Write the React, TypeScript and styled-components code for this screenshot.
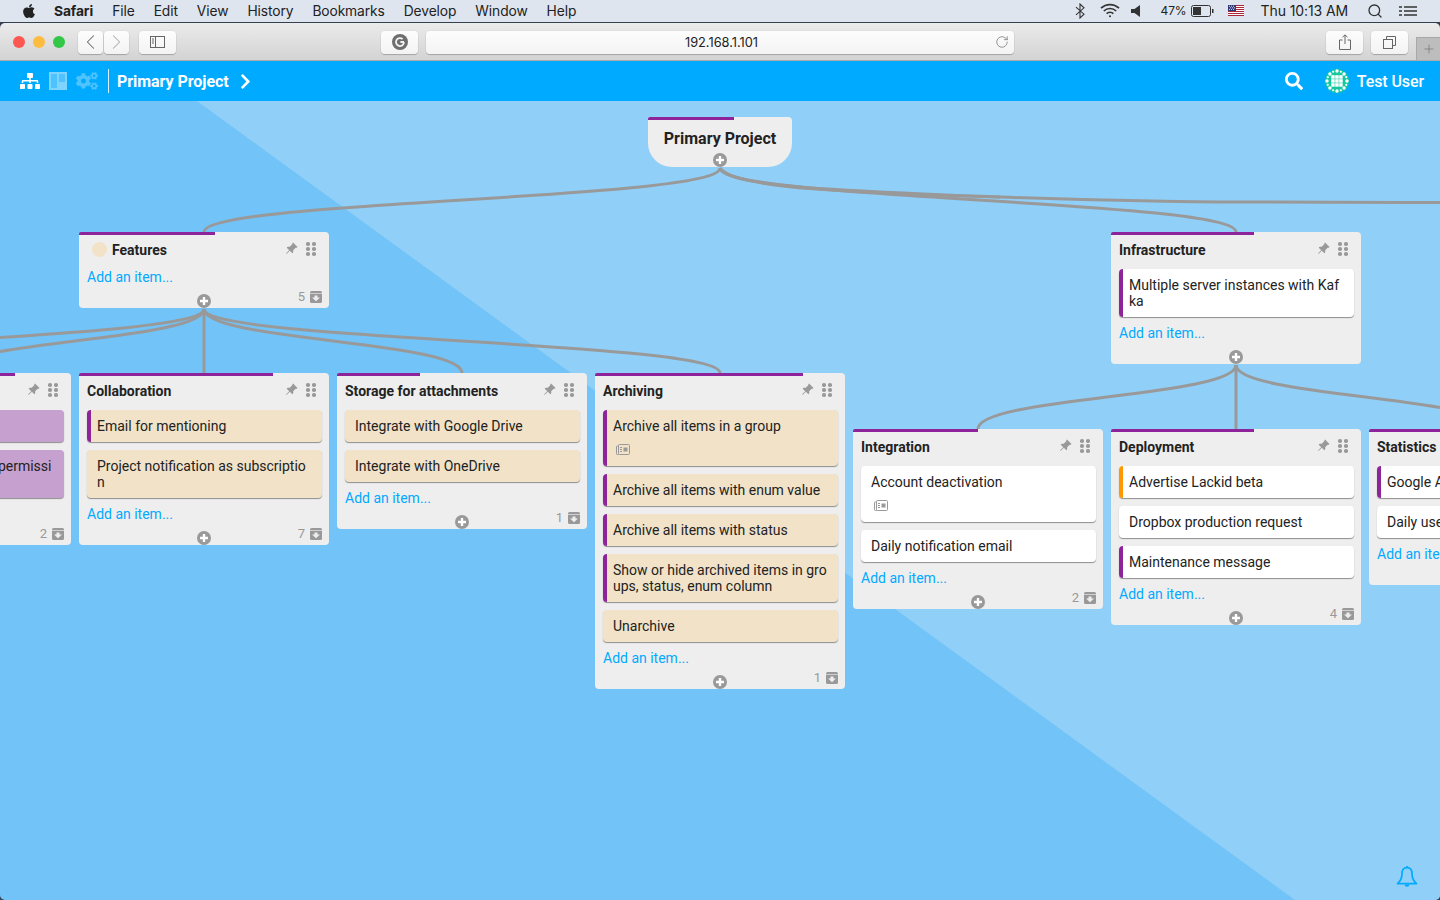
import React from "react";
import styled, { createGlobalStyle } from "styled-components";
import { BsPinAngleFill } from "react-icons/bs";
import { FaApple, FaSitemap, FaCogs, FaChevronRight, FaSearch } from "react-icons/fa";
import { Search as LSearch, RotateCw, ChevronLeft, ChevronRight, Plus } from "lucide-react";

const Global = createGlobalStyle`
  html, body { margin: 0; padding: 0; height: 100%; overflow: hidden; }
  body { font-family: Roboto, "Liberation Sans", sans-serif; }
  * { box-sizing: border-box; }
`;

const Page = styled.div`
  width: 1440px; height: 900px; display: flex; flex-direction: column; overflow: hidden; background: #33404f;
`;
const MenuBar = styled.div`
  height: 22px; flex: none; display: flex; align-items: center; justify-content: space-between;
  background: #dfe5ef; color: #222; font: 400 13.8px Inter, "Liberation Sans", sans-serif; padding: 0 23px 1px 21px;
  letter-spacing: -0.1px;
`;
const MenuGroup = styled.div<{ $gap?: number }>`
  display: flex; align-items: center; gap: ${p => p.$gap ?? 18}px;
`;
const MenuName = styled.span<{ $bold?: boolean }>`
  font-weight: ${p => (p.$bold ? 700 : 400)};
`;
const Percent = styled.span`
  font-size: 12px; margin-left: 6px;
`;
const Clock = styled.span`
  margin-left: 3px; font-size: 14px;
`;
const Toolbar = styled.div`
  height: 38px; flex: none; margin-top: 1px; position: relative; display: flex; align-items: center;
  padding: 1px 32px 0 13px; background: linear-gradient(#ebebeb, #d3d3d3);
  border-top-left-radius: 5px; border-top-right-radius: 5px; border-bottom: 1px solid #ababab;
`;
const Light = styled.span<{ $c: string }>`
  width: 12px; height: 12px; border-radius: 50%; background: ${p => p.$c}; margin-right: 8px; flex: none;
`;
const TBtn = styled.div<{ $w: number; $ml?: number }>`
  width: ${p => p.$w}px; height: 23px; margin-left: ${p => p.$ml ?? 0}px; flex: none;
  display: flex; align-items: center; justify-content: center; background: linear-gradient(#fdfdfd, #f3f3f3);
  border-radius: 4px; box-shadow: 0 1px 1px rgba(0,0,0,.22), 0 0 0 .5px rgba(0,0,0,.06); color: #666; position: relative;
`;
const Address = styled(TBtn)`
  font: 400 12.8px Inter, "Liberation Sans", sans-serif; color: #222; padding-left: 3px;
`;
const ReloadSlot = styled.span`
  position: absolute; right: 5px; top: 4px; display: flex; color: #777;
`;
const NewTab = styled.div`
  position: absolute; right: 0; bottom: 0; width: 24px; height: 23px; background: #bdbdbd;
  border-left: 1px solid #a8a8a8; border-top: 1px solid #a8a8a8; display: flex; align-items: center; justify-content: center; color: #666;
`;
const AppBar = styled.div`
  height: 40px; flex: none; background: #00aaff; display: flex; align-items: center; justify-content: space-between;
  padding: 0 16px 0 20px; color: #fff;
`;
const BarGroup = styled.div`
  display: flex; align-items: center;
`;
const Sep = styled.span`
  width: 1px; height: 24px; background: rgba(255,255,255,.85); margin: 0 8px 0 10px;
`;
const Crumb = styled.span`
  font-size: 16px; font-weight: 700; letter-spacing: -0.05px; margin-right: 8px;
`;
const UserName = styled.span`
  font-size: 16px; font-weight: 500; margin-left: 8px; letter-spacing: -0.1px;
`;
const Canvas = styled.div`
  flex: 1; position: relative; overflow: hidden; background: #72c3f7; border-radius: 0 0 5px 5px;
  &::before {
    content: ""; position: absolute; inset: 0; background: #90cff8;
    clip-path: polygon(197px 0, 100% 0, 100% 100%, 1295px 100%);
  }
`;
const Wires = styled.svg`
  position: absolute; left: 0; top: 0; width: 1440px; height: 799px;
`;
const RootNode = styled.div`
  position: absolute; left: 648px; top: 16px; width: 144px; height: 50px; background: #eee;
  border-radius: 4px 4px 24px 24px; text-align: center; font-size: 16px; font-weight: 700; color: #222; padding-top: 12px; line-height: 20px;
`;
const TopLine = styled.span<{ $w: number }>`
  position: absolute; left: 0; top: 0; height: 3px; width: ${p => p.$w}px; background: #8e2499; border-radius: 2px 0 0 0;
`;
const Node = styled.div<{ $x: number; $y: number }>`
  position: absolute; left: ${p => p.$x}px; top: ${p => p.$y}px; width: 250px; background: #eee; border-radius: 4px;
  padding: 0 8px 23px; color: #222;
`;
const Head = styled.div`
  height: 37px; padding-bottom: 2px; display: flex; align-items: center; font-size: 14px; font-weight: 700;
`;
const Dot = styled.span`
  width: 15px; height: 15px; border-radius: 50%; background: #f1e2c8; margin: 0 5px;
`;
const Pin = styled.span`
  position: absolute; left: 206px; top: 10px; color: #999; display: flex;
`;
const Grip = styled.span`
  position: absolute; left: 227px; top: 10px; display: grid; grid-template-columns: 3.5px 3.5px; gap: 1.5px 2.5px;
  & > i { width: 3.5px; height: 3.5px; border-radius: 50%; background: #999; display: block; }
`;
const Item = styled.div<{ $bg: string; $bar?: string }>`
  position: relative; background: ${p => p.$bg}; border-radius: 4px; padding: 8px 10px; margin-bottom: 8px; font-size: 14px;
  line-height: 16px; word-break: break-all; box-shadow: 0 1px 1px rgba(0,0,0,.4); overflow: hidden; width: 234.5px;
  &::before {
    content: ""; display: ${p => (p.$bar ? "block" : "none")}; position: absolute; left: 0; top: 0; bottom: 0; width: 4px;
    background: ${p => p.$bar};
  }
`;
const Note = styled.div`
  height: 16px; margin-top: 8px; padding: 0 0 2px 3px; display: flex; align-items: center; color: #999;
`;
const AddLink = styled.div`
  color: #00aaff; font-size: 14px; line-height: 16px;
`;
const PlusBtn = styled.span`
  position: absolute; left: 118px; bottom: 0; width: 14px; height: 14px; display: flex;
`;
const RootPlus = styled(PlusBtn)`
  left: 65px;
`;
const Count = styled.div`
  position: absolute; right: 7px; bottom: 5px; display: flex; align-items: center; gap: 5px; color: #999; font-size: 13px; line-height: 12px;
`;
const Bellbox = styled.div`
  position: absolute; right: 22px; bottom: 11px; display: flex;
`;

const P = "#8e2499", O = "#ff9800", BEIGE = "#f1e2c8", WHITE = "#fff", VIOLET = "#c6a0cf";

function ArchiveBox() {
  return (
    <svg width="12" height="12" viewBox="0 0 12 12">
      <rect width="12" height="12" rx="1.5" fill="#999" />
      <rect y="2" width="12" height=".8" fill="#ddd" />
      <path d="M4.5 4.6h3v2H10L6 10.2 2 6.6h2.5z" fill="#eee" />
    </svg>
  );
}
function NoteIcon() {
  return (
    <svg width="14" height="11" viewBox="0 0 14 11" fill="none" stroke="#999" strokeWidth="1">
      <rect x="2.5" y="0.5" width="11" height="10" rx="1" />
      <path d="M2.5 2H1.2a.7.7 0 0 0-.7.7v7a.8.8 0 0 0 .8.8h1.5" />
      <rect x="7.5" y="3.5" width="4" height="4" fill="#999" stroke="none" />
      <path d="M4 3.5h2M4 5.5h2M4 7.5h2" />
    </svg>
  );
}
function PlusIcon() {
  return (
    <svg width="14" height="14" viewBox="0 0 14 14">
      <circle cx="7" cy="7" r="7" fill="#999" />
      <path d="M7 3v8M3 7h8" stroke="#fff" strokeWidth="2.4" />
    </svg>
  );
}
function BellIcon() {
  return (
    <svg width="22" height="24" viewBox="0 0 22 24" fill="none" stroke="#00aaff" strokeWidth="1.7" strokeLinejoin="round">
      <path d="M11 1v1.6M11 2.6c-3.6 0-5 2.6-5 6 0 4.8-1.4 7.5-4.5 10h19c-3.1-2.5-4.5-5.2-4.5-10 0-3.4-1.4-6-5-6z" />
      <path d="M8.6 19.4a2.4 2.4 0 0 0 4.8 0z" fill="#00aaff" stroke="none" />
    </svg>
  );
}

type It = { t: string; bar?: string; note?: boolean };
type N = { x: number; y: number; title: string; w: number; bg: string; items: It[]; count?: number; dot?: boolean; noPlus?: boolean };

const nodes: N[] = [
  { x: 79, y: 131, title: "Features", w: 136, bg: BEIGE, items: [], count: 5, dot: true },
  { x: 1111, y: 131, title: "Infrastructure", w: 143, bg: WHITE, items: [{ t: "Multiple server instances with Kafka", bar: P }] },
  { x: -179, y: 272, title: "Permissions", w: 194, bg: VIOLET, items: [{ t: "Group access" }, { t: "Assign project and group permissions" }], count: 2 },
  { x: 79, y: 272, title: "Collaboration", w: 194, bg: BEIGE, items: [{ t: "Email for mentioning", bar: P }, { t: "Project notification as subscription" }], count: 7 },
  { x: 337, y: 272, title: "Storage for attachments", w: 83, bg: BEIGE, items: [{ t: "Integrate with Google Drive" }, { t: "Integrate with OneDrive" }], count: 1 },
  {
    x: 595, y: 272, title: "Archiving", w: 208, bg: BEIGE, count: 1, items: [
      { t: "Archive all items in a group", bar: P, note: true },
      { t: "Archive all items with enum value", bar: P },
      { t: "Archive all items with status", bar: P },
      { t: "Show or hide archived items in groups, status, enum column", bar: P },
      { t: "Unarchive" },
    ],
  },
  { x: 853, y: 328, title: "Integration", w: 125, bg: WHITE, count: 2, items: [{ t: "Account deactivation", note: true }, { t: "Daily notification email" }] },
  { x: 1111, y: 328, title: "Deployment", w: 143, bg: WHITE, count: 4, items: [{ t: "Advertise Lackid beta", bar: O }, { t: "Dropbox production request" }, { t: "Maintenance message", bar: P }] },
  { x: 1369, y: 328, title: "Statistics", w: 143, bg: WHITE, items: [{ t: "Google Analytics", bar: P }, { t: "Daily users" }], noPlus: true },
];

const wire = (x0: number, y0: number, x1: number, y1: number) => {
  const m = (y0 + y1) / 2;
  return `M${x0} ${y0}C${x0} ${m} ${x1} ${m} ${x1} ${y1}`;
};
const wires = [
  wire(720, 67, 204, 131), wire(720, 67, 1236, 131),
  "M720 67C728 85 820 89 1000 96S1300 100.5 1440 101.5",
  "M720 67C735 88 860 92 1000 96",
  wire(204, 208, -312, 272), wire(204, 208, -54, 272), wire(204, 208, 204, 272), wire(204, 208, 462, 272), wire(204, 208, 720, 272),
  wire(1236, 264, 978, 328), wire(1236, 264, 1236, 328), wire(1236, 264, 1494, 328),
];

const ringDots = Array.from({ length: 16 }, (_, i) => {
  const a = (i / 16) * Math.PI * 2;
  return { x: 12 + Math.cos(a) * 10, y: 12 + Math.sin(a) * 10 };
});

function Identicon() {
  return (
    <svg width="24" height="24" viewBox="0 0 24 24">
      <circle cx="12" cy="12" r="12" fill="#14c8a0" />
      {ringDots.map((d, i) => <circle key={i} cx={d.x} cy={d.y} r={i % 2 ? 1.1 : 1.7} fill="#fff" />)}
      {[0, 1, 2].flatMap(r => [0, 1, 2].map(c => (
        <rect key={`${r}${c}`} x={6.2 + c * 4} y={6.2 + r * 4} width="3.5" height="3.5" fill="#fff" />
      )))}
    </svg>
  );
}

function FlagIcon() {
  return (
    <svg width="16" height="11" viewBox="0 0 16 11">
      <rect width="16" height="11" fill="#fff" />
      {[0, 2, 4, 6, 8, 10].map(y => <rect key={y} y={y} width="16" height="1" fill="#a8283a" />)}
      <rect width="8" height="6" fill="#2f3a7a" />
      <path d="M1 1.2h1M3 1.2h1M5 1.2h1M2 2.8h1M4 2.8h1M6 2.8h1M1 4.4h1M3 4.4h1M5 4.4h1" stroke="#fff" strokeWidth=".8" />
    </svg>
  );
}

export default function App() {
  return (
    <Page>
      <Global />
      <MenuBar>
        <MenuGroup $gap={17}>
          <FaApple size={16} color="#222" />
          <MenuGroup $gap={19}>
            <MenuName $bold>Safari</MenuName>
            <MenuName>File</MenuName>
            <MenuName>Edit</MenuName>
            <MenuName>View</MenuName>
            <MenuName>History</MenuName>
            <MenuName>Bookmarks</MenuName>
            <MenuName>Develop</MenuName>
            <MenuName>Window</MenuName>
            <MenuName>Help</MenuName>
          </MenuGroup>
        </MenuGroup>
        <MenuGroup $gap={14}>
          <svg width="10" height="16" viewBox="0 0 10 16" fill="none" stroke="#333" strokeWidth="1.1">
            <path d="M1 4.2 9 11.2 5 15V1l4 3.8L1 11.8" />
          </svg>
          <svg width="20" height="15" viewBox="0 0 20 15" fill="none" stroke="#333" strokeWidth="1.7" style={{ marginLeft: 1, marginRight: -3 }}>
            <path d="M1 5.2a13 13 0 0 1 18 0M3.8 8a9 9 0 0 1 12.4 0M6.6 10.6a5 5 0 0 1 6.8 0" />
            <circle cx="10" cy="13.2" r="1" fill="#333" stroke="none" />
          </svg>
          <svg width="9" height="12" viewBox="0 0 9 12"><path d="M0 4h3.5L9 0v12L3.5 8H0z" fill="#333" /></svg>
          <MenuGroup $gap={4}>
            <Percent>47%</Percent>
            <svg width="23" height="12" viewBox="0 0 23 12">
              <rect x=".5" y=".5" width="19" height="11" rx="2" fill="none" stroke="#333" />
              <rect x="2" y="2" width="8" height="8" fill="#333" />
              <rect x="21" y="4" width="1.5" height="4" fill="#333" />
            </svg>
          </MenuGroup>
          <FlagIcon />
          <Clock>Thu 10:13 AM</Clock>
          <LSearch size={16} color="#333" style={{ marginLeft: 5 }} />
          <svg width="18" height="10" viewBox="0 0 18 10" style={{ marginLeft: 2 }}>
            <path d="M0 1h3M5 1h13M0 5h3M5 5h13M0 9h3M5 9h13" stroke="#333" strokeWidth="1.6" />
          </svg>
        </MenuGroup>
      </MenuBar>
      <Toolbar>
        <Light $c="#fc5753" />
        <Light $c="#fdbc40" />
        <Light $c="#33c748" />
        <TBtn $w={25} $ml={5}><ChevronLeft size={26} strokeWidth={1} /></TBtn>
        <TBtn $w={25} $ml={1}><ChevronRight size={26} strokeWidth={1} color="#aaa" /></TBtn>
        <TBtn $w={37} $ml={10}>
          <svg width="15" height="12" viewBox="0 0 15 12" fill="none" stroke="#666"><rect x=".5" y=".5" width="14" height="11" /><path d="M5.5 .5v11M2 3h2M2 5h2M2 7h2" /></svg>
        </TBtn>
        <TBtn $w={37} $ml={205}>
          <svg width="16" height="16" viewBox="0 0 16 16"><circle cx="8" cy="8" r="8" fill="#6e6e6e" /><path d="M12 8.2A4 4 0 1 1 10.6 5M8.4 8H12" stroke="#f2f2f2" strokeWidth="1.8" fill="none" /></svg>
        </TBtn>
        <Address $w={588} $ml={8}>
          192.168.1.101
          <ReloadSlot><RotateCw size={14} strokeWidth={1.3} /></ReloadSlot>
        </Address>
        <TBtn $w={37} $ml={312}>
          <svg width="12" height="16" viewBox="0 0 12 16" fill="none" stroke="#666"><path d="M3.5 6H.5v9.5h11V6h-3M6 10V1M3.5 3.2 6 .8l2.5 2.4" /></svg>
        </TBtn>
        <TBtn $w={37} $ml={8}>
          <svg width="13" height="13" viewBox="0 0 13 13" fill="none" stroke="#666"><rect x=".5" y="3.5" width="9" height="9" /><path d="M3.5 3.5v-3h9v9h-3" /></svg>
        </TBtn>
        <NewTab><Plus size={14} strokeWidth={1} /></NewTab>
      </Toolbar>
      <AppBar>
        <BarGroup>
          <FaSitemap size={20} />
          <svg width="18" height="18" viewBox="0 0 18 18" style={{ marginLeft: 9 }}>
            <rect width="18" height="18" fill="#fff" opacity=".3" />
            <path d="M0 0h18v18H0zM2 2v14h6V2zM10 2v8h6V2z" fill="#fff" fillRule="evenodd" opacity=".28" />
          </svg>
          <FaCogs size={22} style={{ marginLeft: 9, opacity: .3 }} />
          <Sep />
          <Crumb>Primary Project</Crumb>
          <FaChevronRight size={17} />
        </BarGroup>
        <BarGroup>
          <FaSearch size={18} style={{ marginRight: 22 }} />
          <Identicon />
          <UserName>Test User</UserName>
        </BarGroup>
      </AppBar>
      <Canvas>
        <Wires viewBox="0 0 1440 799" fill="none" stroke="#999" strokeWidth="3">
          {wires.map((d, i) => <path key={i} d={d} />)}
        </Wires>
        <RootNode>
          <TopLine $w={86} />
          Primary Project
          <RootPlus><PlusIcon /></RootPlus>
        </RootNode>
        {nodes.map(n => (
          <Node key={n.title} $x={n.x} $y={n.y}>
            <TopLine $w={n.w} />
            <Head>{n.dot && <Dot />}{n.title}</Head>
            <Pin><BsPinAngleFill size={13} /></Pin>
            <Grip>{[0, 1, 2, 3, 4, 5].map(i => <i key={i} />)}</Grip>
            {n.items.map(it => (
              <Item key={it.t} $bg={n.bg} $bar={it.bar}>
                {it.t}
                {it.note && <Note><NoteIcon /></Note>}
              </Item>
            ))}
            <AddLink>Add an item...</AddLink>
            {!n.noPlus && <PlusBtn><PlusIcon /></PlusBtn>}
            {n.count !== undefined && <Count>{n.count}<ArchiveBox /></Count>}
          </Node>
        ))}
        <Bellbox><BellIcon /></Bellbox>
      </Canvas>
    </Page>
  );
}
